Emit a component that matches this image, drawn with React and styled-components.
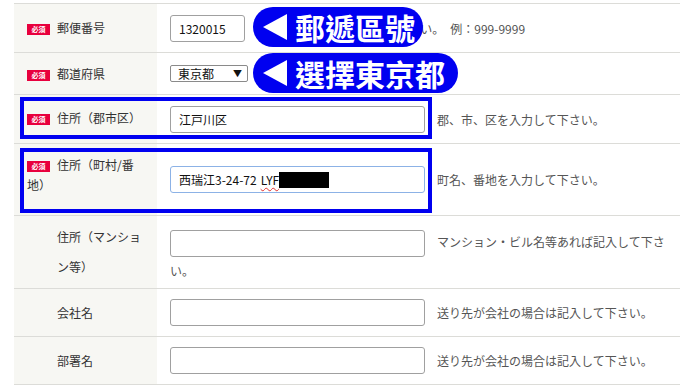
import React from 'react';
import styled, { createGlobalStyle } from 'styled-components';

const GlobalStyle = createGlobalStyle`
  body {
    margin: 0;
    background: #fff;
    font-family: "Noto Sans CJK JP", "Noto Sans", sans-serif;
  }
`;

const Table = styled.div`
  position: relative;
  margin: 3px 0 0 14px;
  width: 666px;
  border-top: 1px solid #dcdcd8;
`;

const Row = styled.div`
  position: relative;
  display: grid;
  grid-template-columns: 143px 1fr;
  height: ${p => p.h}px;
  border-bottom: 1px solid #dcdcd8;
`;

const Label = styled.div`
  display: flex;
  align-items: center;
  background: #f7f7f3;
  padding: 0 13px ${p => p.pb || 0}px ${p => (p.required ? 13 : 43)}px;
  font-size: 12px;
  color: #333;
  line-height: ${p => p.lh || 20}px;
`;

const LabelText = styled.span`
  display: block;
`;

const Badge = styled.span`
  display: inline-flex;
  align-items: center;
  justify-content: center;
  width: 23px;
  height: 11px;
  margin-right: 7px;
  vertical-align: 1px;
  background: #e8003d;
  color: #fff;
  font-size: 7px;
  font-weight: bold;
  line-height: 1;
`;

const Value = styled.div`
  display: flex;
  align-items: ${p => (p.top ? 'flex-start' : 'center')};
  padding: ${p => (p.top ? '12px' : '0')} 10px 0 13px;
  font-size: 12px;
  color: #555;
`;

const Wrap = styled.div`
  line-height: 28px;
`;

const Field = styled.span`
  display: inline-flex;
  align-items: center;
  vertical-align: middle;
  box-sizing: border-box;
  width: ${p => p.w || 255}px;
  height: 27px;
  padding: 0 8px;
  margin-right: ${p => p.mr ?? 12}px;
  border: 1px solid ${p => (p.focus ? '#8cb2e6' : '#a0a0a0')};
  border-radius: 3px;
  background: #fff;
  font-size: 12px;
  color: #111;
  white-space: nowrap;
`;

const Typo = styled.span`
  margin-left: 4px;
  text-decoration: underline wavy #e03030;
  text-decoration-thickness: 1px;
  text-underline-offset: 2px;
`;

const Redact = styled.span`
  display: inline-block;
  width: 50px;
  height: 16px;
  background: #000;
`;

const Select = styled.span`
  display: inline-flex;
  align-items: center;
  justify-content: space-between;
  box-sizing: border-box;
  width: 78px;
  height: 17px;
  padding: 0 5px 0 7px;
  border: 1px solid #8a8a8a;
  border-radius: 2px;
  font-size: 12px;
  color: #111;
  & small {
    font-size: 9px;
  }
`;

const Highlight = styled.div`
  position: absolute;
  left: 6px;
  top: ${p => p.t}px;
  width: 412px;
  height: ${p => p.hh}px;
  box-sizing: border-box;
  border: 4px solid #0000f0;
  pointer-events: none;
`;

const Pill = styled.div`
  position: absolute;
  left: 239px;
  top: ${p => p.t}px;
  width: ${p => p.w}px;
  height: 40px;
  box-sizing: border-box;
  padding-left: 10px;
  display: flex;
  align-items: center;
  gap: 4px;
  border-radius: 20px;
  background: #0000f0;
  color: #fff;
  font-family: "Noto Sans CJK TC", "Noto Sans CJK JP", sans-serif;
  font-size: 30px;
  font-weight: bold;
  line-height: 1;
  white-space: nowrap;
`;

const Arrow = styled.span`
  width: 0;
  height: 0;
  border-top: 13px solid transparent;
  border-bottom: 13px solid transparent;
  border-right: 24px solid #fff;
  margin-right: 4px;
`;

const Example = styled.span`
  margin-left: 6px;
`;

export default function App() {
  return (
    <>
      <GlobalStyle />
      <Table>
        <Row h={48}>
          <Label required><LabelText><Badge>必須</Badge>郵便番号</LabelText></Label>
          <Value>
            <Field w={75} mr={20}>1320015</Field>
            ハイフンなしで入力して下さい。<Example>例：999-9999</Example>
          </Value>
        </Row>
        <Row h={41}>
          <Label required><LabelText><Badge>必須</Badge>都道府県</LabelText></Label>
          <Value>
            <Select>東京都<small>▼</small></Select>
          </Value>
        </Row>
        <Row h={48}>
          <Label required pb={3}><LabelText><Badge>必須</Badge>住所（郡市区）</LabelText></Label>
          <Value>
            <Field>江戸川区</Field>
            郡、市、区を入力して下さい。
          </Value>
          <Highlight t={2} hh={42} />
        </Row>
        <Row h={71}>
          <Label required pb={9}><LabelText><Badge>必須</Badge>住所（町村/番地）</LabelText></Label>
          <Value>
            <Field focus>西瑞江3-24-72<Typo>LYF</Typo><Redact /></Field>
            町名、番地を入力して下さい。
          </Value>
          <Highlight t={4} hh={65} />
        </Row>
        <Row h={72}>
          <Label lh={30}><LabelText>住所（マンション等）</LabelText></Label>
          <Value top>
            <Wrap>
              <Field>{''}</Field>
              マンション・ビル名等あれば記入して下さい。
            </Wrap>
          </Value>
        </Row>
        <Row h={47}>
          <Label><LabelText>会社名</LabelText></Label>
          <Value>
            <Field>{''}</Field>
            送り先が会社の場合は記入して下さい。
          </Value>
        </Row>
        <Row h={47}>
          <Label><LabelText>部署名</LabelText></Label>
          <Value>
            <Field>{''}</Field>
            送り先が会社の場合は記入して下さい。
          </Value>
        </Row>
        <Pill t={3} w={170}><Arrow />郵遞區號</Pill>
        <Pill t={49} w={205}><Arrow />選擇東京都</Pill>
      </Table>
    </>
  );
}
